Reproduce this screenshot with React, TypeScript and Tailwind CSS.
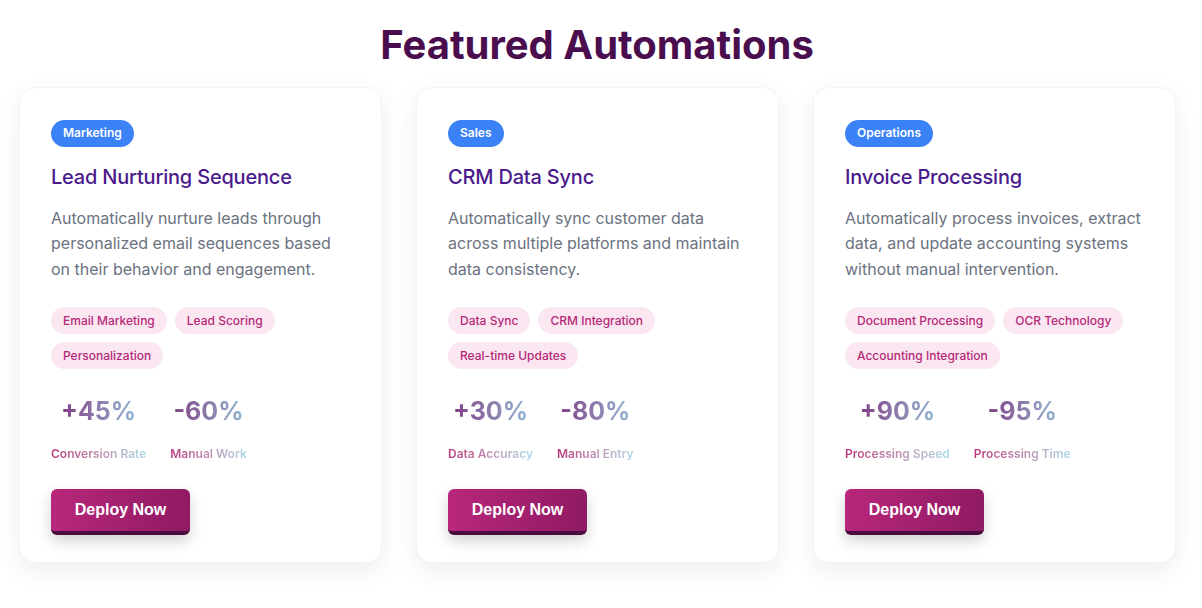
import React from "react";

type Card = {
  badge: string;
  title: string;
  desc: string;
  tags: string[];
  stats: { value: string; label: [string, string] }[];
};

const cards: Card[] = [
  {
    badge: "Marketing",
    title: "Lead Nurturing Sequence",
    desc: "Automatically nurture leads through personalized email sequences based on their behavior and engagement.",
    tags: ["Email Marketing", "Lead Scoring", "Personalization"],
    stats: [
      { value: "+45%", label: ["Conversion", "Rate"] },
      { value: "-60%", label: ["Manual", "Work"] },
    ],
  },
  {
    badge: "Sales",
    title: "CRM Data Sync",
    desc: "Automatically sync customer data across multiple platforms and maintain data consistency.",
    tags: ["Data Sync", "CRM Integration", "Real-time Updates"],
    stats: [
      { value: "+30%", label: ["Data", "Accuracy"] },
      { value: "-80%", label: ["Manual", "Entry"] },
    ],
  },
  {
    badge: "Operations",
    title: "Invoice Processing",
    desc: "Automatically process invoices, extract data, and update accounting systems without manual intervention.",
    tags: ["Document Processing", "OCR Technology", "Accounting Integration"],
    stats: [
      { value: "+90%", label: ["Processing", "Speed"] },
      { value: "-95%", label: ["Processing", "Time"] },
    ],
  },
];

const sans = { fontFamily: "Inter, 'Noto Sans', sans-serif" };

export default function App() {
  return (
    <div className="w-[1202px] h-[608px] bg-white overflow-hidden" style={sans}>
      <h1 className="text-center text-[40px] leading-[48px] font-bold text-[#4a0e4e] pt-[21px] pr-[8px]">
        Featured Automations
      </h1>
      <div className="flex gap-[34px] px-[19px] mt-[18px]">
        {cards.map((c) => (
          <div
            key={c.title}
            className="w-[363px] h-[476px] bg-white rounded-[16px] border border-[#f4f4f4] shadow-[0_8px_24px_rgba(0,0,0,0.07)] px-[31px] pt-[31px]"
          >
            <span className="inline-flex items-center h-[27px] px-[12px] rounded-full bg-[#3b82f6] text-white text-[12px] font-semibold">
              {c.badge}
            </span>
            <h2 className="mt-[16px] text-[20px] leading-[28px] font-medium text-[#4a1a8c] tracking-[-0.2px]">
              {c.title}
            </h2>
            <p className="mt-[15px] text-[16px] leading-[25.6px] text-[#6b7280]">{c.desc}</p>
            <div className="mt-[25px] flex flex-wrap gap-[8px]">
              {c.tags.map((t) => (
                <span
                  key={t}
                  className="inline-flex items-center h-[27px] px-[12px] rounded-full bg-[#fbe7f1] text-[#b52a78] text-[12px] font-medium"
                >
                  {t}
                </span>
              ))}
            </div>
            <div className="mt-[26px] flex gap-[24px]">
              {c.stats.map((s) => (
                <div key={s.value} className="flex flex-col items-center">
                  <span className="text-[25px] leading-[32px] font-bold bg-gradient-to-r from-[#7e3f86] to-[#8fb6d2] bg-clip-text text-transparent">
                    {s.value}
                  </span>
                  <span className="mt-[18px] text-[12px] leading-[18px] font-semibold bg-gradient-to-r from-[#b8347c] to-[#a8dbe8] bg-clip-text text-transparent">
                    {s.label[0]} {s.label[1]}
                  </span>
                </div>
              ))}
            </div>
            <button
              className="mt-[26px] h-[46px] w-[139px] rounded-[6px] bg-gradient-to-r from-[#b8277b] to-[#901a64] border-b-[4px] border-[#4a0c3c] text-white text-[16px] font-bold shadow-[0_6px_14px_rgba(0,0,0,0.18)]"
              style={{ fontFamily: "'Liberation Sans', Arial, sans-serif" }}
            >
              Deploy Now
            </button>
          </div>
        ))}
      </div>
    </div>
  );
}
